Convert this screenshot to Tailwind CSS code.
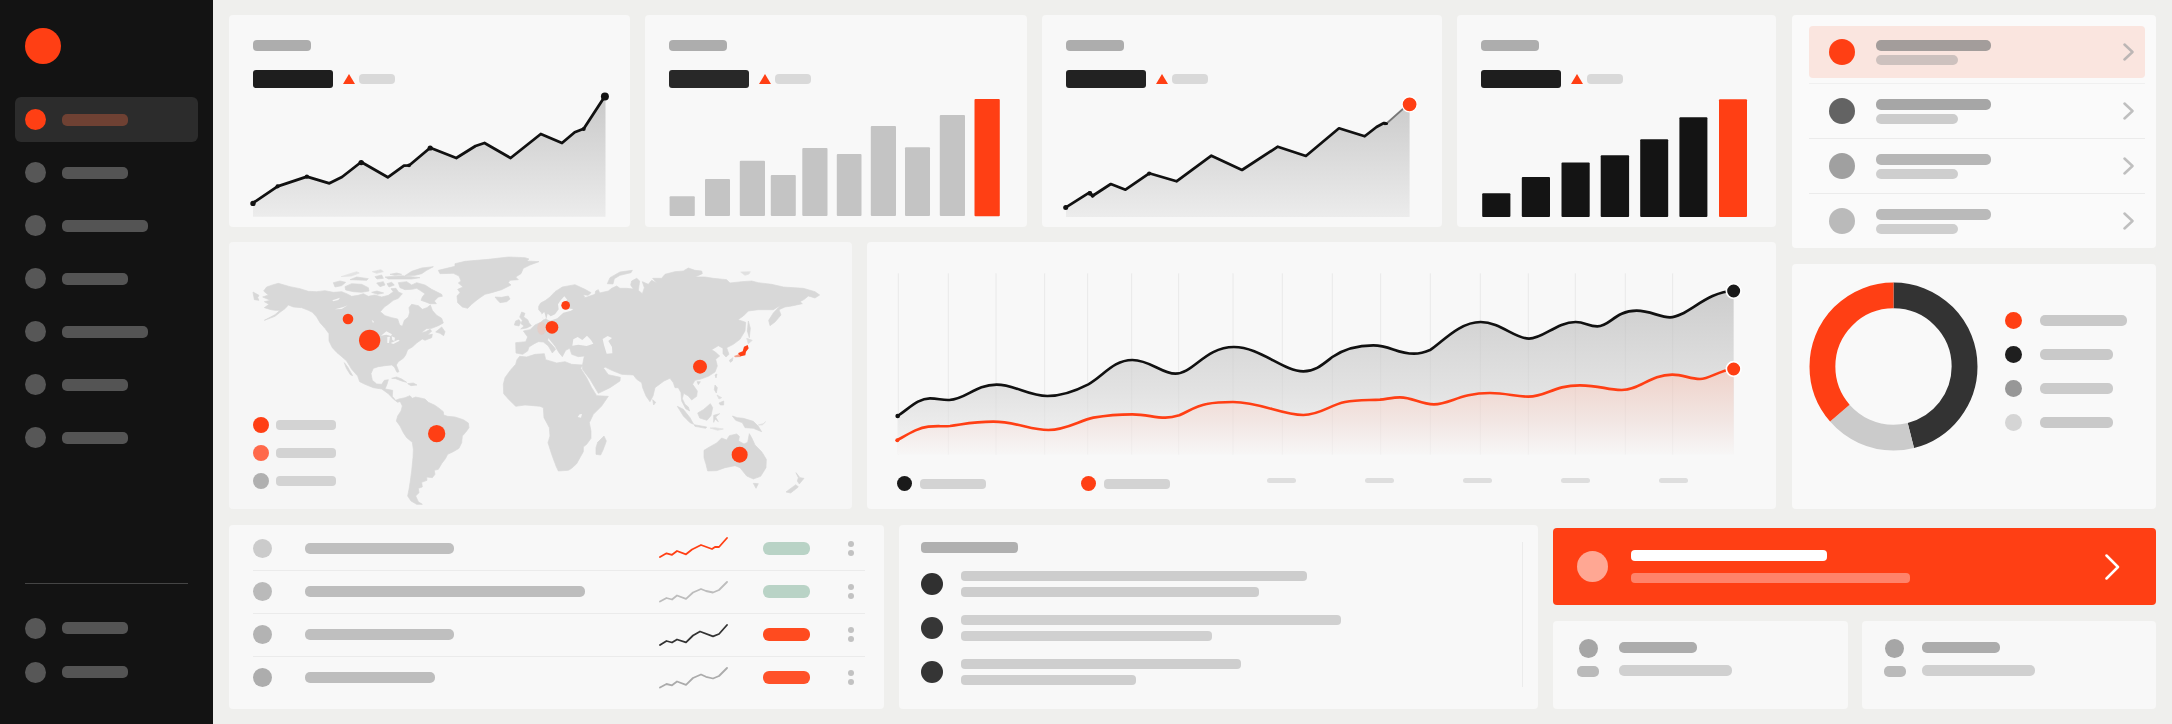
<!DOCTYPE html>
<html lang="en">
<head>
  <meta charset="UTF-8" />
  <meta name="viewport" content="width=device-width, initial-scale=1" />
  <title>Dashboard</title>
  <script src="https://cdn.jsdelivr.net/npm/@tailwindcss/browser@4"></script>
</head>
<body class="bg-[#efefed] font-['Inter',sans-serif] flex min-h-screen">

  <!-- Sidebar -->
  <aside class="w-[213px] shrink-0 bg-[#131313] flex flex-col pt-7 pb-[30px]">
    <a href="#" aria-label="Home" class="ml-[25px] block size-9 rounded-full bg-[#ff3f14]"></a>

    <nav class="mt-[33px] mx-[15px] flex flex-col gap-2">
      <a href="#" aria-label="Overview" aria-current="page" class="flex h-[45px] items-center gap-4 rounded-md bg-[#2c2c2c] pl-[10px]">
        <span class="size-[21px] rounded-full bg-[#ff3f14]"></span>
        <span class="h-3 w-[66px] rounded-[5px] bg-[#6f4133]"></span>
      </a>
      <a href="#" aria-label="Sales" class="flex h-[45px] items-center gap-4 rounded-md pl-[10px]">
        <span class="size-[21px] rounded-full bg-[#575757]"></span>
        <span class="h-3 w-[66px] rounded-[5px] bg-[#545454]"></span>
      </a>
      <a href="#" aria-label="Customers" class="flex h-[45px] items-center gap-4 rounded-md pl-[10px]">
        <span class="size-[21px] rounded-full bg-[#575757]"></span>
        <span class="h-3 w-[86px] rounded-[5px] bg-[#545454]"></span>
      </a>
      <a href="#" aria-label="Regions" class="flex h-[45px] items-center gap-4 rounded-md pl-[10px]">
        <span class="size-[21px] rounded-full bg-[#575757]"></span>
        <span class="h-3 w-[66px] rounded-[5px] bg-[#545454]"></span>
      </a>
      <a href="#" aria-label="Activity" class="flex h-[45px] items-center gap-4 rounded-md pl-[10px]">
        <span class="size-[21px] rounded-full bg-[#575757]"></span>
        <span class="h-3 w-[86px] rounded-[5px] bg-[#545454]"></span>
      </a>
      <a href="#" aria-label="Reports" class="flex h-[45px] items-center gap-4 rounded-md pl-[10px]">
        <span class="size-[21px] rounded-full bg-[#575757]"></span>
        <span class="h-3 w-[66px] rounded-[5px] bg-[#545454]"></span>
      </a>
      <a href="#" aria-label="Files" class="flex h-[45px] items-center gap-4 rounded-md pl-[10px]">
        <span class="size-[21px] rounded-full bg-[#575757]"></span>
        <span class="h-3 w-[66px] rounded-[5px] bg-[#545454]"></span>
      </a>
    </nav>

    <div class="mt-auto mx-[25px] border-t border-[#454545] pt-[22px] flex flex-col">
      <a href="#" aria-label="Settings" class="flex h-11 items-center gap-4">
        <span class="size-[21px] rounded-full bg-[#575757]"></span>
        <span class="h-3 w-[66px] rounded-[5px] bg-[#545454]"></span>
      </a>
      <a href="#" aria-label="Help" class="flex h-11 items-center gap-4">
        <span class="size-[21px] rounded-full bg-[#575757]"></span>
        <span class="h-3 w-[66px] rounded-[5px] bg-[#545454]"></span>
      </a>
    </div>
  </aside>

  <main class="flex-1 min-w-0 px-4 py-[15px] flex flex-col gap-4">

    <div class="grid grid-cols-[1547fr_364fr] gap-4">

      <div class="flex flex-col gap-[15px] min-w-0">

        <!-- KPI cards -->
        <div class="grid grid-cols-[401fr_382fr_400fr_319fr] gap-[15px]">
          <section class="rounded bg-[#f8f8f8]">
            <div class="px-6 pt-[25px]">
              <div class="h-[11px] w-[58px] rounded bg-[#adadad]"></div>
              <div class="mt-[19px] flex items-center">
                <span class="h-[18px] w-20 rounded-[3px] bg-[#1e1e1e]"></span>
                <svg class="ml-[10px] h-[10px] w-3" viewBox="0 0 12 10"><path d="M6 0 12 10H0z" fill="#ff3f14"/></svg>
                <span class="ml-1 h-[10px] w-9 rounded bg-[#d9d9d9]"></span>
              </div>
            </div>
            <svg class="block w-full" viewBox="0 0 401 139" fill="none">
              <defs>
                <linearGradient id="areaA" x1="0" y1="8" x2="0" y2="129" gradientUnits="userSpaceOnUse">
                  <stop offset="0" stop-color="#c9c9c9"/>
                  <stop offset="1" stop-color="#ececec"/>
                </linearGradient>
              </defs>
              <path fill="url(#areaA)" d="M24 115 48.6 98.3 77.9 88.7 100.4 95.3 113 89 132.2 74 158.8 89.3 175 77.7 180.4 77.3 201.2 59.7 227.3 70 246.5 58 255.5 55 281.6 70 311.8 46 333 55 345.7 44.3 354.7 40.7 376.5 8.3V128.7H24z"/>
              <path stroke="#111" stroke-width="2.8" stroke-linejoin="round" d="M24 115 48.6 98.3 77.9 88.7 100.4 95.3 113 89 132.2 74 158.8 89.3 175 77.7 180.4 77.3 201.2 59.7 227.3 70 246.5 58 255.5 55 281.6 70 311.8 46 333 55 345.7 44.3 354.7 40.7 375.9 8.3"/>
              <g fill="#111">
                <circle cx="24" cy="115.4" r="2.7"/>
                <circle cx="48.6" cy="98.3" r="2.1"/>
                <circle cx="77.9" cy="88.7" r="2.1"/>
                <circle cx="132.2" cy="74.6" r="2.7"/>
                <circle cx="180" cy="77.3" r="1.9"/>
                <circle cx="201.2" cy="60" r="2.6"/>
                <circle cx="354.7" cy="40.9" r="2"/>
                <circle cx="375.9" cy="8.6" r="4"/>
              </g>
            </svg>
          </section>

          <section class="rounded bg-[#f8f8f8]">
            <div class="px-6 pt-[25px]">
              <div class="h-[11px] w-[58px] rounded bg-[#adadad]"></div>
              <div class="mt-[19px] flex items-center">
                <span class="h-[18px] w-20 rounded-[3px] bg-[#282828]"></span>
                <svg class="ml-[10px] h-[10px] w-3" viewBox="0 0 12 10"><path d="M6 0 12 10H0z" fill="#ff3f14"/></svg>
                <span class="ml-1 h-[10px] w-9 rounded bg-[#d9d9d9]"></span>
              </div>
            </div>
            <svg class="block w-full" viewBox="0 0 382 139" fill="#c4c4c4">
              <rect x="24.6" y="108.3" width="25.2" height="19.7" rx="1"/>
              <rect x="60" y="91" width="25" height="37" rx="1"/>
              <rect x="94.8" y="72.7" width="25.2" height="55.3" rx="1"/>
              <rect x="125.8" y="87" width="25" height="41" rx="1"/>
              <rect x="157.3" y="60" width="25.2" height="68" rx="1"/>
              <rect x="191.8" y="66" width="24.7" height="62" rx="1"/>
              <rect x="225.8" y="38" width="25.2" height="90" rx="1"/>
              <rect x="260" y="59.3" width="25" height="68.7" rx="1"/>
              <rect x="294.8" y="27" width="25.2" height="101" rx="1"/>
              <rect x="329.5" y="11" width="25.3" height="117.3" rx="1" fill="#ff3f14"/>
            </svg>
          </section>

          <section class="rounded bg-[#f8f8f8]">
            <div class="px-6 pt-[25px]">
              <div class="h-[11px] w-[58px] rounded bg-[#adadad]"></div>
              <div class="mt-[19px] flex items-center">
                <span class="h-[18px] w-20 rounded-[3px] bg-[#222]"></span>
                <svg class="ml-[10px] h-[10px] w-3" viewBox="0 0 12 10"><path d="M6 0 12 10H0z" fill="#ff3f14"/></svg>
                <span class="ml-1 h-[10px] w-9 rounded bg-[#d9d9d9]"></span>
              </div>
            </div>
            <svg class="block w-full" viewBox="0 0 400 139" fill="none">
              <path fill="url(#areaA)" d="M24 119.7 47.6 104.3 50.4 108 68.8 96 83.5 101.7 107.2 85.3 134.5 93.3 169.4 67.7 200 82 235.8 58.7 263.9 68 297 40.3 322.7 48.3 334.5 39 344.7 35.7 367.6 16.3V129H24z"/>
              <path stroke="#777" stroke-width="1.8" d="M344 36 362 20"/>
              <path stroke="#111" stroke-width="2.7" stroke-linejoin="round" stroke-linecap="round" d="M23.5 119.7 47.6 104.3 50.4 108 68.8 96 83.5 101.7 107.2 85.3 134.5 93.3 169.4 67.7 200 82 235.8 58.7 263.9 68 297 40.3 322.7 48.3 334.5 39 341.9 35 344.7 35.7"/>
              <g fill="#111">
                <circle cx="23.7" cy="119.6" r="2.5"/>
                <circle cx="48" cy="105.4" r="2.3"/>
                <circle cx="50.6" cy="107.6" r="2.1"/>
                <circle cx="107.2" cy="85.6" r="2.1"/>
                <circle cx="343" cy="35.5" r="1.8"/>
              </g>
              <circle cx="367.6" cy="16.3" r="7.6" fill="#ff3f14" stroke="#fff" stroke-width="1.4"/>
            </svg>
          </section>

          <section class="rounded bg-[#f8f8f8]">
            <div class="px-6 pt-[25px]">
              <div class="h-[11px] w-[58px] rounded bg-[#adadad]"></div>
              <div class="mt-[19px] flex items-center">
                <span class="h-[18px] w-20 rounded-[3px] bg-[#1e1e1e]"></span>
                <svg class="ml-[10px] h-[10px] w-3" viewBox="0 0 12 10"><path d="M6 0 12 10H0z" fill="#ff3f14"/></svg>
                <span class="ml-1 h-[10px] w-9 rounded bg-[#d9d9d9]"></span>
              </div>
            </div>
            <svg class="block w-full" viewBox="0 0 319 139" fill="#141414">
              <rect x="25.2" y="105.3" width="28.2" height="23.7" rx="1"/>
              <rect x="64.8" y="89" width="28.2" height="40" rx="1"/>
              <rect x="104.5" y="74.5" width="28.2" height="54.5" rx="1"/>
              <rect x="143.7" y="67.3" width="28.4" height="61.7" rx="1"/>
              <rect x="183.2" y="51.3" width="28" height="77.7" rx="1"/>
              <rect x="222.4" y="29.3" width="28" height="99.7" rx="1"/>
              <rect x="262" y="11.3" width="28" height="117.7" rx="1" fill="#ff3f14"/>
            </svg>
          </section>
        </div>

        <div class="grid grid-cols-[623fr_909fr] gap-[15px]">

          <!-- World map -->
          <section class="relative rounded bg-[#f6f6f6]">
            <svg class="block w-full" viewBox="0 0 623 267" role="img" aria-label="World map">
              <g transform="translate(-4 -1) scale(.33333)">
                <g fill="#d8d8d8" stroke="#d8d8d8" stroke-width="2" stroke-linejoin="round">
                  <!-- North America -->
                  <path d="M113 168 130 162 116 150 125 138 145 131 160 127 195 137 225 143 250 151 275 152 300 149 325 154 350 152 365 158 380 166 400 163 415 158 430 166 450 162 470 168 490 163 505 152 498 143 513 142 520 153 532 158 520 172 505 178 490 190 478 198 466 212 480 224 500 230 518 234 524 252 532 256 538 238 550 228 554 214 552 200 560 190 580 194 592 205 606 200 616 192 622 208 634 222 650 232 655 246 640 254 620 262 604 263 588 275 602 272 615 265 620 270 608 282 622 280 620 290 600 298 592 294 575 306 562 318 548 326 542 342 535 352 520 362 514 372 522 392 516 394 508 378 500 372 480 374 460 377 445 382 438 398 442 418 455 429 470 430 478 418 490 416 486 430 480 444 503 448 502 466 512 478 522 474 530 480 518 484 505 474 490 458 470 444 445 440 420 430 404 422 398 405 380 385 365 360 348 345 336 335 322 320 312 300 312 278 300 262 285 245 275 228 262 214 250 208 230 200 205 198 190 192 180 203 165 214 150 226 118 238 150 221 165 208 150 208 138 206 118 200 132 190 118 182 136 178Z"/>
                  <path d="M358 365 368 378 383 404 376 401 364 382Z"/>
                  <path d="M84 153 102 163 98 170 102 178 88 176Z"/>
                  <path d="M632 273 650 258 660 272 656 284 645 277Z"/>
                  <path d="M500 412 515 408 530 414 545 424 530 420 512 413Z"/>
                  <path d="M548 428 565 426 576 432 558 434Z"/>
                  <!-- Arctic islands -->
                  <path d="M520 125 545 122 560 132 575 125 600 132 620 145 650 160 652 166 640 168 628 180 634 188 615 188 600 182 588 178 592 168 600 158 585 148 575 142 560 145 540 146 525 140Z"/>
                  <path d="M360 137 380 128 410 130 430 140 432 150 410 154 385 152 362 147Z"/>
                  <path d="M325 125 345 120 362 124 350 134 330 138Z"/>
                  <path d="M540 104 560 91 590 81 625 77 605 88 590 98 570 103Z"/>
                  <path d="M480 108 530 104 585 110 560 114 490 114Z"/>
                  <path d="M455 126 475 122 480 132 465 137Z"/>
                  <path d="M486 128 500 124 508 132 492 138Z"/>
                  <path d="M348 107 375 98 395 92 403 96 380 105Z" opacity=".6"/>
                  <path d="M375 116 395 108 430 113 425 118Z"/>
                  <path d="M442 92 468 86 475 92 455 97Z" opacity=".7"/>
                  <path d="M450 107 470 102 475 112 456 114Z"/>
                  <path d="M495 100 515 96 530 100 510 103Z"/>
                  <path d="M440 154 456 150 476 156 458 160Z"/>
                  <!-- Greenland, Iceland -->
                  <path d="M640 88 690 76 690 68 720 61 790 55 850 48 900 50 912 54 905 60 942 62 915 72 895 82 888 98 872 108 880 116 855 118 850 125 858 132 830 146 800 155 780 160 765 170 752 180 740 190 728 202 712 198 698 185 696 165 705 155 698 145 714 138 700 126 708 120 702 105 685 97 645 98Z"/>
                  <path d="M810 168 830 169 850 165 855 174 845 182 825 185 818 178Z"/>
                  <!-- South America -->
                  <path d="M522 474 540 470 555 464 562 472 572 468 600 474 610 484 628 492 640 500 655 512 656 522 668 526 690 528 715 536 730 546 732 560 722 574 712 585 710 605 702 622 685 632 668 640 662 652 650 668 640 685 628 688 630 700 622 710 605 708 606 718 590 724 592 738 580 742 582 755 572 765 580 782 592 790 575 790 558 780 548 765 552 745 556 720 560 690 564 650 565 625 562 604 545 590 535 575 525 555 514 540 518 525 528 510 532 495Z"/>
                  <!-- British Isles -->
                  <path d="M890 213 900 217 896 228 908 236 912 245 919 254 905 261 887 264 897 255 888 248 892 238 884 228Z"/>
                  <path d="M868 252 872 240 882 236 887 244 882 255Z"/>
                  <!-- Africa -->
                  <path d="M884 346 905 348 930 340 958 338 962 356 995 366 1020 362 1040 370 1073 372 1067 382 1085 410 1100 440 1115 464 1150 466 1130 495 1105 520 1093 545 1098 570 1098 592 1085 610 1075 618 1075 632 1066 648 1055 668 1040 682 1030 688 1000 690 993 675 980 640 969 605 975 585 973 560 957 530 955 500 945 496 925 494 900 492 872 496 850 474 836 458 835 430 840 410 856 388 872 370 876 356Z"/>
                  <path d="M1137 585 1144 600 1135 625 1127 642 1113 640 1113 620 1118 604Z"/>
                  <!-- Eurasia -->
                  <path d="M872 305 902 302 908 288 895 270 915 266 930 252 947 244 956 236 950 216 941 206 941 196 947 186 962 178 975 168 990 152 1012 138 1050 131 1080 145 1098 155 1090 163 1075 161 1080 170 1095 165 1110 160 1112 150 1120 146 1124 156 1150 150 1160 142 1175 135 1185 142 1205 142 1225 144 1217 132 1220 120 1235 112 1244 120 1240 148 1252 158 1258 140 1252 122 1270 130 1280 118 1295 126 1283 112 1310 112 1320 100 1350 92 1375 90 1390 81 1410 88 1430 90 1432 98 1410 108 1440 108 1465 112 1505 116 1515 126 1550 122 1580 120 1600 125 1640 130 1675 138 1735 142 1770 152 1784 162 1770 171 1750 165 1738 175 1725 182 1732 188 1700 195 1680 198 1662 206 1668 222 1650 243 1635 254 1631 238 1645 216 1660 200 1668 192 1645 206 1600 206 1570 210 1555 225 1539 236 1562 244 1560 270 1545 295 1525 310 1505 320 1512 340 1503 348 1494 338 1494 322 1480 314 1460 326 1472 334 1484 345 1472 355 1477 375 1470 393 1450 406 1425 415 1410 418 1403 430 1417 450 1415 466 1400 477 1390 465 1376 457 1372 473 1380 490 1390 498 1394 510 1382 503 1370 480 1368 455 1360 440 1350 440 1345 425 1335 412 1317 420 1290 440 1284 465 1275 482 1263 465 1253 440 1250 425 1235 415 1225 402 1190 400 1160 388 1140 378 1136 382 1150 401 1186 409 1185 420 1155 440 1120 457 1110 440 1095 415 1080 395 1072 384 1073 370 1078 345 1060 347 1040 340 1034 322 1022 328 1012 347 1002 335 990 315 970 290 968 298 985 316 992 325 982 336 970 315 955 303 940 302 928 308 912 318 908 330 893 340 873 336Z"/>
                  <path d="M1147 128 1155 110 1185 93 1222 88 1218 95 1185 103 1168 113 1164 129Z"/>
                  <path d="M1547 93 1576 92 1572 99 1560 103Z" opacity=".7"/>
                  <!-- Asian islands -->
                  <path d="M1570 240 1576 262 1573 290 1567 270Z"/>
                  <path d="M1565 292 1582 298 1570 308Z" opacity=".8"/>
                  <path d="M1513 358 1524 350 1522 360 1516 364Z"/>
                  <path d="M1283 476 1292 484 1286 492Z"/>
                  <path d="M1470 402 1476 399 1473 411Z"/>
                  <path d="M1416 422 1426 422 1420 431Z"/>
                  <path d="M1470 432 1477 440 1474 456 1468 446Z"/>
                  <path d="M1476 462 1490 470 1482 474Z" opacity=".8"/>
                  <path d="M1482 486 1496 480 1496 492 1486 492Z"/>
                  <path d="M1357 496 1375 505 1395 530 1406 550 1395 545 1375 525Z"/>
                  <path d="M1407 551 1445 558 1442 562 1410 556Z"/>
                  <path d="M1418 516 1435 506 1456 488 1463 500 1458 524 1446 538 1424 531Z"/>
                  <path d="M1466 523 1484 518 1472 528 1480 542 1470 534 1466 544Z"/>
                  <path d="M1455 561 1470 560 1495 564 1478 568Z" opacity=".7"/>
                  <path d="M1522 525 1537 530 1555 532 1585 541 1600 556 1610 572 1585 562 1560 560 1552 545 1532 538Z"/>
                  <path d="M1600 552 1615 548 1622 542 1612 552Z" opacity=".7"/>
                  <!-- Australia, New Zealand -->
                  <path d="M1437 628 1455 617 1475 606 1490 591 1505 597 1513 584 1535 579 1543 586 1541 600 1557 609 1568 604 1573 578 1581 592 1590 612 1610 632 1624 655 1623 680 1607 706 1585 714 1565 705 1553 690 1545 680 1530 674 1500 680 1475 689 1448 690 1443 670 1437 650Z"/>
                  <path d="M1585 727 1600 728 1593 742Z"/>
                  <path d="M1713 695 1725 710 1737 712 1723 729 1717 720 1720 710Z"/>
                  <path d="M1713 731 1720 738 1697 756 1683 753 1700 740Z"/>
                </g>
                <!-- Inland waters -->
                <g fill="#f6f6f6">
                  <path d="M1018 166 1027 176 1017 184 1016 202 1045 204 1038 209 1015 215 997 232 975 239 964 234 968 218 977 226 990 220 1001 205 999 190 1007 178Z"/>
                  <path d="M948 222 958 213 963 232 956 236Z"/>
                  <path d="M1042 314 1045 295 1058 288 1072 297 1086 284 1098 297 1105 308 1085 315 1060 311Z"/>
                  <path d="M1133 294 1148 285 1161 291 1150 300 1161 318 1162 337 1145 338 1137 312Z"/>
                  <path d="M1058 528 1064 520 1071 519 1068 530Z"/>
                  <path d="M468 284 484 271 501 280 498 285 484 281Z"/>
                  <path d="M487 288 495 287 492 306 487 306Z"/>
                  <path d="M500 286 510 290 508 300 502 297Z"/>
                  <path d="M497 306 520 296 524 299 505 309Z"/>
                  <path d="M322 178 345 170 340 177 325 181Z"/>
                  <path d="M330 205 355 198 368 193 350 204Z"/>
                  <path d="M440 236 447 242 444 246Z"/>
                  <path d="M560 160 585 165 580 178 560 172Z"/>
                </g>
                <ellipse cx="950" cy="262" rx="13" ry="19" fill="#f0c4b8" opacity=".5"/>
                <path fill="#ff3f14" d="M1557 317 1568 312 1571 322 1563 332 1561 343 1541 347 1540 336 1553 331Z"/>
                <path fill="#f3a18c" d="M1527 345 1541 340 1549 348 1530 349Z"/>
                <g fill="#ff3f14">
                  <circle cx="369" cy="234" r="16"/>
                  <circle cx="434" cy="298" r="32"/>
                  <circle cx="635" cy="578" r="26"/>
                  <circle cx="1022" cy="193" r="13"/>
                  <circle cx="981" cy="259" r="19"/>
                  <circle cx="1425" cy="377" r="21"/>
                  <circle cx="1544" cy="641" r="24"/>
                </g>
              </g>
            </svg>
            <ul class="absolute left-6 bottom-5 flex flex-col gap-3">
              <li class="flex items-center gap-[7px]"><span class="size-4 rounded-full bg-[#ff3f14]"></span><span class="h-[10px] w-[60px] rounded bg-[#d3d3d3]"></span></li>
              <li class="flex items-center gap-[7px]"><span class="size-4 rounded-full bg-[#ff694a]"></span><span class="h-[10px] w-[60px] rounded bg-[#d3d3d3]"></span></li>
              <li class="flex items-center gap-[7px]"><span class="size-4 rounded-full bg-[#b0b0b0]"></span><span class="h-[10px] w-[60px] rounded bg-[#d3d3d3]"></span></li>
            </ul>
          </section>

          <!-- Trend chart -->
          <section class="rounded bg-[#f8f8f8]">
            <svg class="block w-full" viewBox="0 0 909 220" fill="none" role="img" aria-label="Trend">
              <defs>
                <linearGradient id="trendDark" x1="0" y1="150" x2="0" y2="640" gradientUnits="userSpaceOnUse">
                  <stop offset="0" stop-color="#cdcdcd"/>
                  <stop offset=".6" stop-color="#e2e2e2"/>
                  <stop offset="1" stop-color="#f4f4f4"/>
                </linearGradient>
                <linearGradient id="trendRed" x1="0" y1="390" x2="0" y2="640" gradientUnits="userSpaceOnUse">
                  <stop offset="0" stop-color="#efd2ca"/>
                  <stop offset=".6" stop-color="#f2e6e3"/>
                  <stop offset="1" stop-color="#f7f6f6"/>
                </linearGradient>
              </defs>
              <g transform="translate(-7 -1) scale(.33333)">
                <path stroke="#e9e9e9" stroke-width="3" d="M115 97V640M265 97V640M408 97V640M554 97V640M683 97V640M815 97V640M956 97V640M1119 97V640M1267 97V640M1417 97V640M1562 97V640M1711 97V640M1861 97V640M2005 97V640M2146 97V640M2296 97V640M2438 97V640"/>
                <path fill="url(#trendDark)" d="M113 525C150 500 175 472 210 472C235 472 245 478 268 477C320 474 345 431 410 431C465 431 505 465 562 465C610 465 650 448 685 430C730 405 760 357 817 357C870 357 905 398 946 398C1000 398 1035 318 1122 318C1200 318 1270 391 1330 391C1365 391 1385 373 1417 348C1455 322 1495 313 1540 313C1590 313 1610 338 1662 338C1682 338 1698 332 1712 326C1750 300 1800 243 1862 243C1920 243 1965 293 2007 293C2050 293 2090 243 2147 243C2175 243 2185 256 2212 256C2250 256 2265 209 2330 209C2370 209 2400 229 2430 229C2480 229 2540 150 2621 150V640H113Z"/>
                <path fill="url(#trendRed)" d="M113 598C150 576 175 560 205 557C230 554 250 557 270 555C310 550 340 542 400 542C470 542 510 567 565 567C620 567 660 538 700 530C740 523 770 520 817 520C860 520 880 530 916 530C935 530 945 527 958 523C990 508 1010 494 1040 489C1065 484 1090 483 1119 483C1200 483 1265 522 1330 522C1380 522 1410 492 1455 483C1490 476 1525 478 1560 476C1580 474 1600 469 1620 469C1660 469 1680 490 1722 490C1770 490 1800 456 1890 456C1940 456 1965 467 2005 467C2060 467 2080 433 2160 433C2220 433 2240 447 2285 447C2340 447 2370 401 2437 401C2470 401 2490 414 2520 414C2550 414 2575 388 2621 384V640H113Z"/>
                <path stroke="#000" stroke-opacity=".03" stroke-width="3" d="M265 478V640M408 432V640M554 465V640M683 431V640M815 357V640M956 397V640M1119 318V640M1267 370V640M1417 348V640M1562 314V640M1711 326V640M1861 243V640M2005 293V640M2146 243V640M2296 214V640M2438 229V640"/>
                <path stroke="#111" stroke-width="8" stroke-linecap="round" d="M113 525C150 500 175 472 210 472C235 472 245 478 268 477C320 474 345 431 410 431C465 431 505 465 562 465C610 465 650 448 685 430C730 405 760 357 817 357C870 357 905 398 946 398C1000 398 1035 318 1122 318C1200 318 1270 391 1330 391C1365 391 1385 373 1417 348C1455 322 1495 313 1540 313C1590 313 1610 338 1662 338C1682 338 1698 332 1712 326C1750 300 1800 243 1862 243C1920 243 1965 293 2007 293C2050 293 2090 243 2147 243C2175 243 2185 256 2212 256C2250 256 2265 209 2330 209C2370 209 2400 229 2430 229C2480 229 2540 150 2621 150"/>
                <path stroke="#ff3f14" stroke-width="8" stroke-linecap="round" d="M111 598C150 576 175 560 205 557C230 554 250 557 270 555C310 550 340 542 400 542C470 542 510 567 565 567C620 567 660 538 700 530C740 523 770 520 817 520C860 520 880 530 916 530C935 530 945 527 958 523C990 508 1010 494 1040 489C1065 484 1090 483 1119 483C1200 483 1265 522 1330 522C1380 522 1410 492 1455 483C1490 476 1525 478 1560 476C1580 474 1600 469 1620 469C1660 469 1680 490 1722 490C1770 490 1800 456 1890 456C1940 456 1965 467 2005 467C2060 467 2080 433 2160 433C2220 433 2240 447 2285 447C2340 447 2370 401 2437 401C2470 401 2490 414 2520 414C2550 414 2575 388 2621 384"/>
                <circle cx="113" cy="525" r="7" fill="#111"/>
                <circle cx="112" cy="598" r="6" fill="#ff3f14"/>
                <circle cx="2621" cy="150" r="22" fill="#1a1a1a" stroke="#fff" stroke-width="5"/>
                <circle cx="2621" cy="384" r="22" fill="#ff3f14" stroke="#fff" stroke-width="5"/>
              </g>
            </svg>
            <div class="flex items-start pl-[30px] pt-[14px]">
              <div class="flex w-[184px] items-center gap-2"><span class="size-[15px] rounded-full bg-[#1a1a1a]"></span><span class="h-[10px] w-[66px] rounded bg-[#d3d3d3]"></span></div>
              <div class="flex w-[186px] items-center gap-2"><span class="size-[15px] rounded-full bg-[#ff3f14]"></span><span class="h-[10px] w-[66px] rounded bg-[#d3d3d3]"></span></div>
              <div class="flex gap-[69px] pt-[2px]">
                <span class="h-[5px] w-[29px] rounded-sm bg-[#dedede]"></span>
                <span class="h-[5px] w-[29px] rounded-sm bg-[#dedede]"></span>
                <span class="h-[5px] w-[29px] rounded-sm bg-[#dedede]"></span>
                <span class="h-[5px] w-[29px] rounded-sm bg-[#dedede]"></span>
                <span class="h-[5px] w-[29px] rounded-sm bg-[#dedede]"></span>
              </div>
            </div>
          </section>
        </div>
      </div>

      <div class="flex flex-col gap-4 min-w-0">

        <!-- Selectable list -->
        <section class="rounded bg-[#fafafa] pl-[17px] pr-[11px] pt-[11px]">
          <button type="button" aria-label="Open item 1" class="mb-[5px] flex h-[52px] w-full items-center rounded bg-[#fae5df] pl-5 pr-[11px]">
            <span class="size-[26px] rounded-full bg-[#ff3f14]"></span>
            <span class="ml-[21px] flex flex-col gap-1">
              <span class="h-[11px] w-[115px] rounded-[5px] bg-[#a39d9b]"></span>
              <span class="h-[10px] w-[82px] rounded-[5px] bg-[#cdc1be]"></span>
            </span>
            <svg class="ml-auto h-[18px] w-[11px]" viewBox="0 0 11 18" fill="none" stroke="#bcb6b5" stroke-width="2.5" stroke-linecap="round" stroke-linejoin="round"><path d="M1.5 1.5 9.5 9 1.5 16.5"/></svg>
          </button>
          <button type="button" aria-label="Open item 2" class="flex h-[55px] w-full items-center border-t border-[#f0f0f0] pl-5 pr-[11px]">
            <span class="size-[26px] rounded-full bg-[#636363]"></span>
            <span class="ml-[21px] flex flex-col gap-1">
              <span class="h-[11px] w-[115px] rounded-[5px] bg-[#a6a6a6]"></span>
              <span class="h-[10px] w-[82px] rounded-[5px] bg-[#cccccc]"></span>
            </span>
            <svg class="ml-auto h-[18px] w-[11px]" viewBox="0 0 11 18" fill="none" stroke="#bfbfbf" stroke-width="2.5" stroke-linecap="round" stroke-linejoin="round"><path d="M1.5 1.5 9.5 9 1.5 16.5"/></svg>
          </button>
          <button type="button" aria-label="Open item 3" class="flex h-[55px] w-full items-center border-t border-[#ebebeb] pl-5 pr-[11px]">
            <span class="size-[26px] rounded-full bg-[#a0a0a0]"></span>
            <span class="ml-[21px] flex flex-col gap-1">
              <span class="h-[11px] w-[115px] rounded-[5px] bg-[#b6b6b6]"></span>
              <span class="h-[10px] w-[82px] rounded-[5px] bg-[#cecece]"></span>
            </span>
            <svg class="ml-auto h-[18px] w-[11px]" viewBox="0 0 11 18" fill="none" stroke="#bfbfbf" stroke-width="2.5" stroke-linecap="round" stroke-linejoin="round"><path d="M1.5 1.5 9.5 9 1.5 16.5"/></svg>
          </button>
          <button type="button" aria-label="Open item 4" class="flex h-[55px] w-full items-center border-t border-[#ebebeb] pl-5 pr-[11px]">
            <span class="size-[26px] rounded-full bg-[#bababa]"></span>
            <span class="ml-[21px] flex flex-col gap-1">
              <span class="h-[11px] w-[115px] rounded-[5px] bg-[#bababa]"></span>
              <span class="h-[10px] w-[82px] rounded-[5px] bg-[#cecece]"></span>
            </span>
            <svg class="ml-auto h-[18px] w-[11px]" viewBox="0 0 11 18" fill="none" stroke="#bfbfbf" stroke-width="2.5" stroke-linecap="round" stroke-linejoin="round"><path d="M1.5 1.5 9.5 9 1.5 16.5"/></svg>
          </button>
        </section>

        <!-- Donut -->
        <section class="flex flex-1 items-start rounded bg-[#f9f9f9] pl-[17px] pt-[18px]">
          <svg class="size-[169px] shrink-0" viewBox="0 0 170 170" fill="none" role="img" aria-label="Breakdown">
            <g transform="rotate(-90 85 85)" stroke-width="26">
              <circle cx="85" cy="85" r="71.5" pathLength="360" stroke="#333" stroke-dasharray="165.8 194.2"/>
              <circle cx="85" cy="85" r="71.5" pathLength="360" stroke="#cbcbcb" stroke-dasharray="63.2 296.8" stroke-dashoffset="-165.8"/>
              <circle cx="85" cy="85" r="71.5" pathLength="360" stroke="#ff3f14" stroke-dasharray="131 229" stroke-dashoffset="-229"/>
            </g>
          </svg>
          <ul class="ml-[27px] mt-[30px] flex flex-col gap-[17px]">
            <li class="flex items-center gap-[18px]"><span class="size-[17px] rounded-full bg-[#ff3f14]"></span><span class="h-[11px] w-[87px] rounded-[5px] bg-[#c9c9c9]"></span></li>
            <li class="flex items-center gap-[18px]"><span class="size-[17px] rounded-full bg-[#1f1f1f]"></span><span class="h-[11px] w-[73px] rounded-[5px] bg-[#c9c9c9]"></span></li>
            <li class="flex items-center gap-[18px]"><span class="size-[17px] rounded-full bg-[#979797]"></span><span class="h-[11px] w-[73px] rounded-[5px] bg-[#cbcbcb]"></span></li>
            <li class="flex items-center gap-[18px]"><span class="size-[17px] rounded-full bg-[#d5d5d5]"></span><span class="h-[11px] w-[73px] rounded-[5px] bg-[#c9c9c9]"></span></li>
          </ul>
        </section>
      </div>
    </div>

    <div class="grid flex-1 grid-cols-[655fr_639fr_603fr] gap-[15px]">

      <!-- Table -->
      <section class="rounded bg-[#f8f8f8] pl-6 pr-[19px] pt-[2px] pb-2">
        <table class="w-full table-fixed">
          <colgroup>
            <col class="w-[52px]" />
            <col />
            <col class="w-[104px]" />
            <col class="w-[85px]" />
            <col class="w-[17px]" />
          </colgroup>
          <tbody>
            <tr class="h-[43px] border-b border-[#ebebeb]">
              <td><div class="size-[19px] rounded-full bg-[#cbcbcb]"></div></td>
              <td><div class="h-[11px] w-[149px] rounded-[5px] bg-[#bfbfbf]"></div></td>
              <td><svg class="h-[22px] w-[70px]" viewBox="-1 -1 70 22" fill="none" stroke="#ff3f14" stroke-width="1.8" stroke-linecap="round" stroke-linejoin="round"><path d="M0 19 6.5 15.3 12 16.8 17 13 26 16.3 32 11.5 41 7 52 11 55 9 59 9 67 0"/></svg></td>
              <td><div class="h-[13px] w-[47px] rounded-md bg-[#b9d3c6]"></div></td>
              <td><button type="button" aria-label="Row menu" class="flex flex-col gap-[3px]"><span class="size-[6px] rounded-full bg-[#c2c2c2]"></span><span class="size-[6px] rounded-full bg-[#c2c2c2]"></span></button></td>
            </tr>
            <tr class="h-[43px] border-b border-[#ebebeb]">
              <td><div class="size-[19px] rounded-full bg-[#bababa]"></div></td>
              <td><div class="h-[11px] w-[280px] rounded-[5px] bg-[#bdbdbd]"></div></td>
              <td><svg class="h-[22px] w-[70px]" viewBox="-1 -1 70 22" fill="none" stroke="#bdbdbd" stroke-width="1.8" stroke-linecap="round" stroke-linejoin="round"><path d="M0 19.5 6.5 16 12 17.5 17 13.5 26 16.8 33 10.5 41 7 46 9 53 10.5 59 8 67 0"/></svg></td>
              <td><div class="h-[13px] w-[47px] rounded-md bg-[#b9d3c6]"></div></td>
              <td><button type="button" aria-label="Row menu" class="flex flex-col gap-[3px]"><span class="size-[6px] rounded-full bg-[#c2c2c2]"></span><span class="size-[6px] rounded-full bg-[#c2c2c2]"></span></button></td>
            </tr>
            <tr class="h-[43px] border-b border-[#ebebeb]">
              <td><div class="size-[19px] rounded-full bg-[#b3b3b3]"></div></td>
              <td><div class="h-[11px] w-[149px] rounded-[5px] bg-[#bfbfbf]"></div></td>
              <td><svg class="h-[22px] w-[70px]" viewBox="-1 -1 70 22" fill="none" stroke="#333" stroke-width="1.8" stroke-linecap="round" stroke-linejoin="round"><path d="M0 20 6.5 16 12 17.5 17 14.5 26 17.3 33 10.5 40 6.5 53 11.3 59 9 67 0"/></svg></td>
              <td><div class="h-[13px] w-[47px] rounded-md bg-[#ff4b1f]"></div></td>
              <td><button type="button" aria-label="Row menu" class="flex flex-col gap-[3px]"><span class="size-[6px] rounded-full bg-[#c2c2c2]"></span><span class="size-[6px] rounded-full bg-[#c2c2c2]"></span></button></td>
            </tr>
            <tr class="h-[43px]">
              <td><div class="size-[19px] rounded-full bg-[#adadad]"></div></td>
              <td><div class="h-[11px] w-[130px] rounded-[5px] bg-[#bdbdbd]"></div></td>
              <td><svg class="h-[22px] w-[70px]" viewBox="-1 -1 70 22" fill="none" stroke="#ababab" stroke-width="1.8" stroke-linecap="round" stroke-linejoin="round"><path d="M0 19.5 6.5 16 12 17.3 17 13.5 26 16.8 33 10 41 6.5 46 8.8 53 10.5 59 8 67 0"/></svg></td>
              <td><div class="h-[13px] w-[47px] rounded-md bg-[#ff5129]"></div></td>
              <td><button type="button" aria-label="Row menu" class="flex flex-col gap-[3px]"><span class="size-[6px] rounded-full bg-[#c2c2c2]"></span><span class="size-[6px] rounded-full bg-[#c2c2c2]"></span></button></td>
            </tr>
          </tbody>
        </table>
      </section>

      <!-- Feed -->
      <section class="flex justify-between rounded bg-[#f8f8f8] pl-[22px] pr-[15px] pt-[17px] pb-[22px]">
        <div>
          <div class="h-[11px] w-[97px] rounded bg-[#b0b0b0]"></div>
          <ul class="mt-[18px] flex flex-col gap-[18px]">
            <li class="flex items-center gap-[18px]">
              <span class="size-[22px] rounded-full bg-[#303030]"></span>
              <span class="flex flex-col gap-[6px]"><span class="h-[10px] w-[346px] rounded bg-[#cdcdcd]"></span><span class="h-[10px] w-[298px] rounded bg-[#cdcdcd]"></span></span>
            </li>
            <li class="flex items-center gap-[18px]">
              <span class="size-[22px] rounded-full bg-[#363636]"></span>
              <span class="flex flex-col gap-[6px]"><span class="h-[10px] w-[380px] rounded bg-[#d0d0d0]"></span><span class="h-[10px] w-[251px] rounded bg-[#d0d0d0]"></span></span>
            </li>
            <li class="flex items-center gap-[18px]">
              <span class="size-[22px] rounded-full bg-[#353535]"></span>
              <span class="flex flex-col gap-[6px]"><span class="h-[10px] w-[280px] rounded bg-[#cecece]"></span><span class="h-[10px] w-[175px] rounded bg-[#cecece]"></span></span>
            </li>
          </ul>
        </div>
        <div class="w-px bg-[#ebebeb]"></div>
      </section>

      <!-- Call to action and shortcuts -->
      <div class="flex flex-col gap-4 pt-[3px]">
        <a href="#" aria-label="Get started" class="flex h-[77px] items-center rounded bg-[#ff3f14] pl-6 pr-9">
          <span class="size-[31px] rounded-full bg-[#ffa793]"></span>
          <span class="ml-[23px] flex flex-col gap-3">
            <span class="h-[11px] w-[196px] rounded bg-white"></span>
            <span class="h-[10px] w-[279px] rounded bg-[#ff836a]"></span>
          </span>
          <svg class="ml-auto h-[26px] w-[15px]" viewBox="0 0 15 26" fill="none" stroke="#fff" stroke-width="2.5" stroke-linecap="round" stroke-linejoin="round"><path d="M1.5 1.5 13 13 1.5 24.5"/></svg>
        </a>
        <div class="grid flex-1 grid-cols-[295fr_295fr] gap-[14px]">
          <a href="#" aria-label="Shortcut 1" class="flex items-start gap-5 rounded bg-[#f8f8f8] pl-6 pt-[18px]">
            <span class="flex w-[22px] flex-col items-center gap-2"><span class="size-[19px] rounded-full bg-[#a6a6a6]"></span><span class="h-[11px] w-[22px] rounded-[5px] bg-[#bababa]"></span></span>
            <span class="flex flex-col gap-3 pt-[3px]"><span class="h-[11px] w-[78px] rounded-[5px] bg-[#acacac]"></span><span class="h-[11px] w-[113px] rounded-[5px] bg-[#d0d0d0]"></span></span>
          </a>
          <a href="#" aria-label="Shortcut 2" class="flex items-start gap-4 rounded bg-[#f8f8f8] pl-[22px] pt-[18px]">
            <span class="flex w-[22px] flex-col items-center gap-2"><span class="size-[19px] rounded-full bg-[#a6a6a6]"></span><span class="h-[11px] w-[22px] rounded-[5px] bg-[#bababa]"></span></span>
            <span class="flex flex-col gap-3 pt-[3px]"><span class="h-[11px] w-[78px] rounded-[5px] bg-[#acacac]"></span><span class="h-[11px] w-[113px] rounded-[5px] bg-[#d0d0d0]"></span></span>
          </a>
        </div>
      </div>
    </div>
  </main>

</body>
</html>
